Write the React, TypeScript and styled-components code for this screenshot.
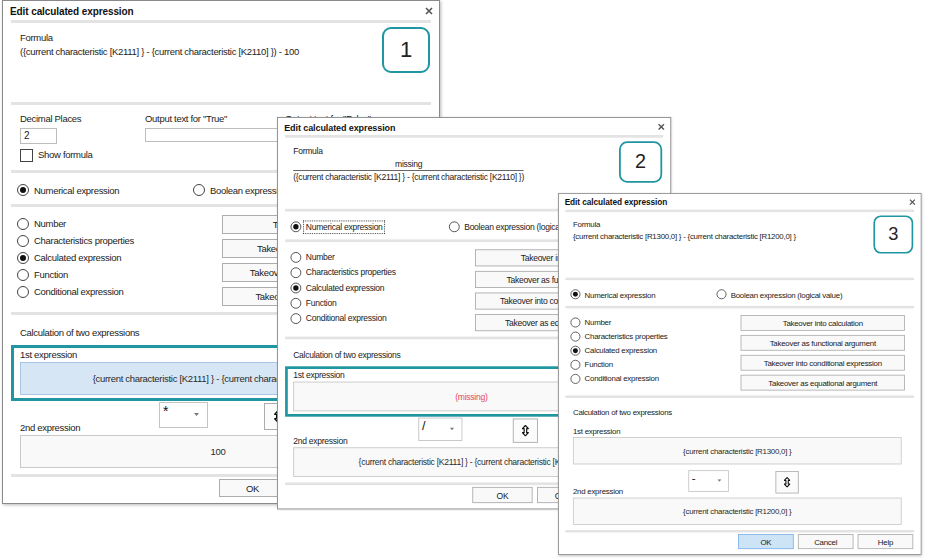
import React from 'react';
import styled, { createGlobalStyle } from 'styled-components';

const GlobalStyle = createGlobalStyle`
  html, body {
    margin: 0;
    padding: 0;
    background: #fff;
  }
  body {
    font-family: "Liberation Sans", Arial, sans-serif;
    font-size: 9.5px;
    letter-spacing: -0.3px;
    color: #222;
  }
  * {
    box-sizing: border-box;
  }
`;

const TEAL = '#2096a2';

const Desktop = styled.div`
  position: relative;
  width: 926px;
  height: 559px;
  overflow: hidden;
  background: #fff;
`;

const Window = styled.div<{ $x: number; $y: number; $scale: number }>`
  position: absolute;
  left: ${(p) => p.$x}px;
  top: ${(p) => p.$y}px;
  width: 438px;
  transform: scale(${(p) => p.$scale});
  transform-origin: 0 0;
  background: #fff;
  border: 1px solid #8a8a8a;
  box-shadow: 1px 1px 3px rgba(0, 0, 0, 0.28);
  display: flex;
  flex-direction: column;
`;

const TitleBar = styled.div`
  height: 19px;
  display: flex;
  align-items: center;
  justify-content: space-between;
  padding: 1px 6px 0 7px;
`;

const Title = styled.div`
  font-weight: bold;
  font-size: 10px;
  letter-spacing: -0.1px;
  color: #111;
`;

const Separator = styled.div`
  height: 3px;
  margin: 0 8px;
  background: #e3e3e3;
  flex-shrink: 0;
`;

const FormulaSection = styled.div`
  height: 79px;
  display: flex;
  padding: 0 9px 0 17px;
`;

const FormulaText = styled.div`
  flex: 1;
  padding-top: 8px;
  line-height: 14px;
`;

const Badge = styled.div`
  width: 48px;
  height: 46px;
  margin-top: 4px;
  border: 2px solid ${TEAL};
  border-radius: 9px;
  display: flex;
  align-items: center;
  justify-content: center;
  font-size: 22px;
  letter-spacing: 0;
  color: #222;
`;

const Fraction = styled.div`
  display: inline-flex;
  flex-direction: column;
  align-items: center;
`;

const Numerator = styled.div`
  align-self: stretch;
  text-align: center;
  border-bottom: 1px solid #555;
`;

const DecimalSection = styled.div`
  height: 65px;
  display: grid;
  grid-template-columns: 125px 140px 1fr;
  grid-template-rows: 30px 1fr;
  padding: 7px 0 0 17px;
  line-height: 14px;
`;

const Field = styled.div`
  display: flex;
  flex-direction: column;
  white-space: nowrap;
`;

const TextInput = styled.div<{ $w: number }>`
  width: ${(p) => p.$w}px;
  height: 16px;
  margin-top: 2px;
  border: 1px solid #bdbdbd;
  background: #fff;
  padding: 0 3px;
  line-height: 14px;
  font-size: 10px;
`;

const CheckRow = styled.div`
  grid-column: 1 / -1;
  display: flex;
  align-items: center;
  gap: 5px;
  margin-top: 6px;
  height: 14px;
`;

const Checkbox = styled.div`
  width: 13px;
  height: 13px;
  border: 1px solid #444;
  background: #fff;
`;

const ModeRow = styled.div`
  height: 31px;
  display: flex;
  align-items: center;
  padding: 3px 0 0 14px;
`;

const RadioItem = styled.div<{ $w?: number }>`
  display: flex;
  align-items: center;
  gap: 5px;
  white-space: nowrap;
  ${(p) => (p.$w ? `width: ${p.$w}px;` : '')}
`;

const RadioCircle = styled.div<{ $on?: boolean }>`
  width: 12px;
  height: 12px;
  border-radius: 50%;
  border: 1px solid #444;
  background: #fff;
  display: flex;
  align-items: center;
  justify-content: center;
  flex-shrink: 0;

  &::after {
    content: '';
    width: 6px;
    height: 6px;
    border-radius: 50%;
    background: ${(p) => (p.$on ? '#111' : 'transparent')};
  }
`;

const Focused = styled.span`
  border: 1px dotted #333;
  padding: 1px 2px;
  margin-left: -3px;
`;

const OptionsSection = styled.div`
  height: 105px;
  display: flex;
  justify-content: space-between;
  padding: 8px 19px 0 14px;
`;

const RadioList = styled.div`
  display: flex;
  flex-direction: column;
`;

const RadioRow = styled(RadioItem)`
  height: 17px;
`;

const ButtonColumn = styled.div`
  width: 198px;
  display: flex;
  flex-direction: column;
  gap: 5px;
`;

const Button = styled.div<{ $primary?: boolean }>`
  height: 19px;
  border: 1px solid ${(p) => (p.$primary ? '#7eb4ea' : '#adadad')};
  background: ${(p) => (p.$primary ? '#cde4f7' : '#f9f9f9')};
  display: flex;
  align-items: center;
  justify-content: center;
  white-space: nowrap;
  overflow: hidden;
  color: #1a1a1a;
`;

const CalcSection = styled.div`
  padding-top: 11px;
  line-height: 14px;
`;

const SectionTitle = styled.div`
  padding-left: 17px;
  height: 14px;
`;

const Highlight = styled.div<{ $on?: boolean }>`
  margin: 5px 8px 0 8px;
  border: 3px solid ${(p) => (p.$on ? TEAL : 'transparent')};
  padding: 0 12px 3px 6px;
`;

const ExprBox = styled.div<{ $selected?: boolean }>`
  height: 33px;
  border: 1px solid ${(p) => (p.$selected ? '#a8c8e8' : '#c9c9c9')};
  background: ${(p) => (p.$selected ? '#d6e6f5' : '#f9f9f9')};
  display: flex;
  align-items: center;
  justify-content: center;
  white-space: nowrap;
  overflow: hidden;
  color: #2a2a2a;
`;

const SecondBox = styled(ExprBox)`
  margin: 0 23px 6px 17px;
`;

const Missing = styled.span`
  color: #e6455f;
`;

const OperatorRow = styled.div`
  height: 34px;
  display: flex;
  align-items: flex-start;
  padding-left: 17px;
`;

const OperatorLabel = styled.div`
  width: 139px;
  align-self: flex-end;
  height: 14px;
`;

const Dropdown = styled.div`
  width: 49px;
  height: 26px;
  margin-top: 1px;
  border: 1px solid #c4c4c4;
  background: #fff;
  display: flex;
  justify-content: space-between;
  align-items: flex-start;
  padding: 0 8px 0 3px;
`;

const OperatorGlyph = styled.span`
  font-size: 14px;
  line-height: 16px;
  letter-spacing: 0;
  color: #111;
`;

const DropArrow = styled.svg`
  margin-top: 10px;
`;

const SwapButton = styled.div`
  width: 28px;
  height: 27px;
  margin: 2px 0 0 56px;
  border: 1px solid #adadad;
  background: #fbfbfb;
  display: flex;
  align-items: center;
  justify-content: center;
`;

const Footer = styled.div`
  height: 26px;
  display: flex;
  justify-content: flex-end;
  gap: 5px;
  padding: 2px 9px 0 0;
`;

const FooterButton = styled(Button)`
  width: 67px;
  height: 18px;
`;

const CloseIcon = () => (
  <svg width="8" height="8" viewBox="0 0 8 8">
    <path d="M1 1 L7 7 M7 1 L1 7" stroke="#555" strokeWidth="1.6" />
  </svg>
);

const SwapIcon = () => (
  <svg width="8" height="13" viewBox="0 0 8 13">
    <path
      d="M4 0.8 L7.3 4.3 L5.4 4.3 L5.4 8.7 L7.3 8.7 L4 12.2 L0.7 8.7 L2.6 8.7 L2.6 4.3 L0.7 4.3 Z"
      fill="#fff"
      stroke="#111"
      strokeWidth="1.3"
      strokeLinejoin="round"
    />
  </svg>
);

const takeovers = [
  'Takeover into calculation',
  'Takeover as functional argument',
  'Takeover into conditional expression',
  'Takeover as equational argument',
];

const kinds = [
  'Number',
  'Characteristics properties',
  'Calculated expression',
  'Function',
  'Conditional expression',
];

type DialogProps = {
  x: number;
  y: number;
  scale: number;
  badge: string;
  formula: React.ReactNode;
  decimals?: boolean;
  focusMode?: boolean;
  highlight?: boolean;
  expr1: React.ReactNode;
  expr1Selected?: boolean;
  op: string;
  expr2: React.ReactNode;
  primaryOk?: boolean;
};

const CalcDialog = ({
  x,
  y,
  scale,
  badge,
  formula,
  decimals,
  focusMode,
  highlight,
  expr1,
  expr1Selected,
  op,
  expr2,
  primaryOk,
}: DialogProps) => (
  <Window $x={x} $y={y} $scale={scale}>
    <TitleBar>
      <Title>Edit calculated expression</Title>
      <CloseIcon />
    </TitleBar>
    <Separator />
    <FormulaSection>
      <FormulaText>
        <div>Formula</div>
        {formula}
      </FormulaText>
      <Badge>{badge}</Badge>
    </FormulaSection>
    <Separator />
    {decimals && (
      <>
        <DecimalSection>
          <Field>
            Decimal Places
            <TextInput $w={37}>2</TextInput>
          </Field>
          <Field>
            Output text for "True"
            <TextInput $w={134} />
          </Field>
          <Field>
            Output text for "False"
            <TextInput $w={134} />
          </Field>
          <CheckRow>
            <Checkbox />
            Show formula
          </CheckRow>
        </DecimalSection>
        <Separator />
      </>
    )}
    <ModeRow>
      <RadioItem $w={176}>
        <RadioCircle $on />
        {focusMode ? (
          <Focused>Numerical expression</Focused>
        ) : (
          'Numerical expression'
        )}
      </RadioItem>
      <RadioItem>
        <RadioCircle />
        Boolean expression (logical value)
      </RadioItem>
    </ModeRow>
    <Separator />
    <OptionsSection>
      <RadioList>
        {kinds.map((k) => (
          <RadioRow key={k}>
            <RadioCircle $on={k === 'Calculated expression'} />
            {k}
          </RadioRow>
        ))}
      </RadioList>
      <ButtonColumn>
        {takeovers.map((t) => (
          <Button key={t}>{t}</Button>
        ))}
      </ButtonColumn>
    </OptionsSection>
    <Separator />
    <CalcSection>
      <SectionTitle>Calculation of two expressions</SectionTitle>
      <Highlight $on={highlight}>
        <div>1st expression</div>
        <ExprBox $selected={expr1Selected}>{expr1}</ExprBox>
      </Highlight>
      <OperatorRow>
        <OperatorLabel>2nd expression</OperatorLabel>
        <Dropdown>
          <OperatorGlyph>{op}</OperatorGlyph>
          <DropArrow width="5" height="3" viewBox="0 0 5 3">
            <path d="M0 0 L5 0 L2.5 3 Z" fill="#777" />
          </DropArrow>
        </Dropdown>
        <SwapButton>
          <SwapIcon />
        </SwapButton>
      </OperatorRow>
      <SecondBox>{expr2}</SecondBox>
    </CalcSection>
    <Separator />
    <Footer>
      <FooterButton $primary={primaryOk}>OK</FooterButton>
      <FooterButton>Cancel</FooterButton>
      <FooterButton>Help</FooterButton>
    </Footer>
  </Window>
);

const K_DIFF = '{current characteristic [K2111] } - {current characteristic [K2110] }';

export default function App() {
  return (
    <Desktop>
      <GlobalStyle />
      <CalcDialog
        x={2}
        y={0}
        scale={1}
        badge="1"
        decimals
        formula={<div>({K_DIFF}) - 100</div>}
        highlight
        expr1={K_DIFF}
        expr1Selected
        op="*"
        expr2="100"
      />
      <CalcDialog
        x={277}
        y={117}
        scale={0.9}
        badge="2"
        focusMode
        formula={
          <Fraction>
            <Numerator>missing</Numerator>
            <div>({K_DIFF})</div>
          </Fraction>
        }
        highlight
        expr1={<Missing>(missing)</Missing>}
        op="/"
        expr2={K_DIFF}
      />
      <CalcDialog
        x={558}
        y={193}
        scale={0.83}
        badge="3"
        formula={
          <div>
            {'{current characteristic [R1300,0] } - {current characteristic [R1200,0] }'}
          </div>
        }
        expr1="{current characteristic [R1300,0] }"
        op="-"
        expr2="{current characteristic [R1200,0] }"
        primaryOk
      />
    </Desktop>
  );
}
